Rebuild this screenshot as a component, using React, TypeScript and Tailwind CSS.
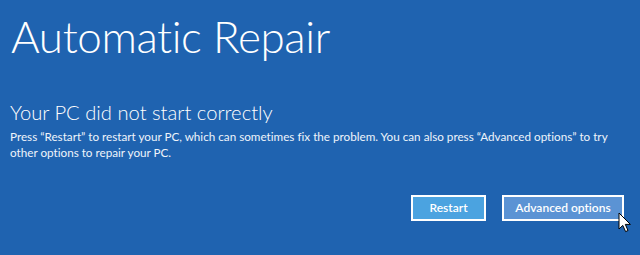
const Cursor = () => (
  <svg
    className="absolute left-[618px] top-[212px]"
    width="14"
    height="21"
    viewBox="0 0 14 21"
  >
    <path
      d="M1 1 L1 17 L4.8 13.4 L7.6 19.6 L10 18.5 L7.3 12.4 L12.4 12.4 Z"
      fill="#ffffff"
      stroke="#000000"
      strokeWidth="1"
      strokeLinejoin="miter"
    />
  </svg>
);

const App = () => {
  return (
    <div
      className="relative w-[640px] h-[255px] overflow-hidden bg-[#1f63b0] text-white [font-variant-ligatures:none]"
      style={{ fontFamily: 'Lato, "Open Sans", sans-serif' }}
    >
      <div className="pl-[10px] pt-[6px]">
        <h1 className="pl-[1px] text-[44px] font-light leading-[60px] tracking-[-0.4px]">
          Automatic Repair
        </h1>

        <h2 className="mt-[32px] text-[20.2px] font-light leading-[28px]">
          Your PC did not start correctly
        </h2>
        <p className="mt-[2px] text-[11.7px] leading-[16px] text-[#eef4fb] whitespace-nowrap">
          Press “Restart” to restart your PC, which can sometimes fix the problem. You can
          also press “Advanced options” to try
          <br />
          other options to repair your PC.
        </p>
      </div>

      <div className="flex justify-end gap-[16px] pr-[16px] pt-[35px]">
        <button className="h-[26px] w-[75px] border-2 border-white bg-[#4ba3e0] text-[12px] font-semibold text-white">
          Restart
        </button>
        <button className="h-[26px] w-[122px] border-2 border-white bg-[#5b93d4] text-[12px] font-semibold text-white">
          Advanced options
        </button>
      </div>

      <Cursor />
    </div>
  );
};

export default App;
